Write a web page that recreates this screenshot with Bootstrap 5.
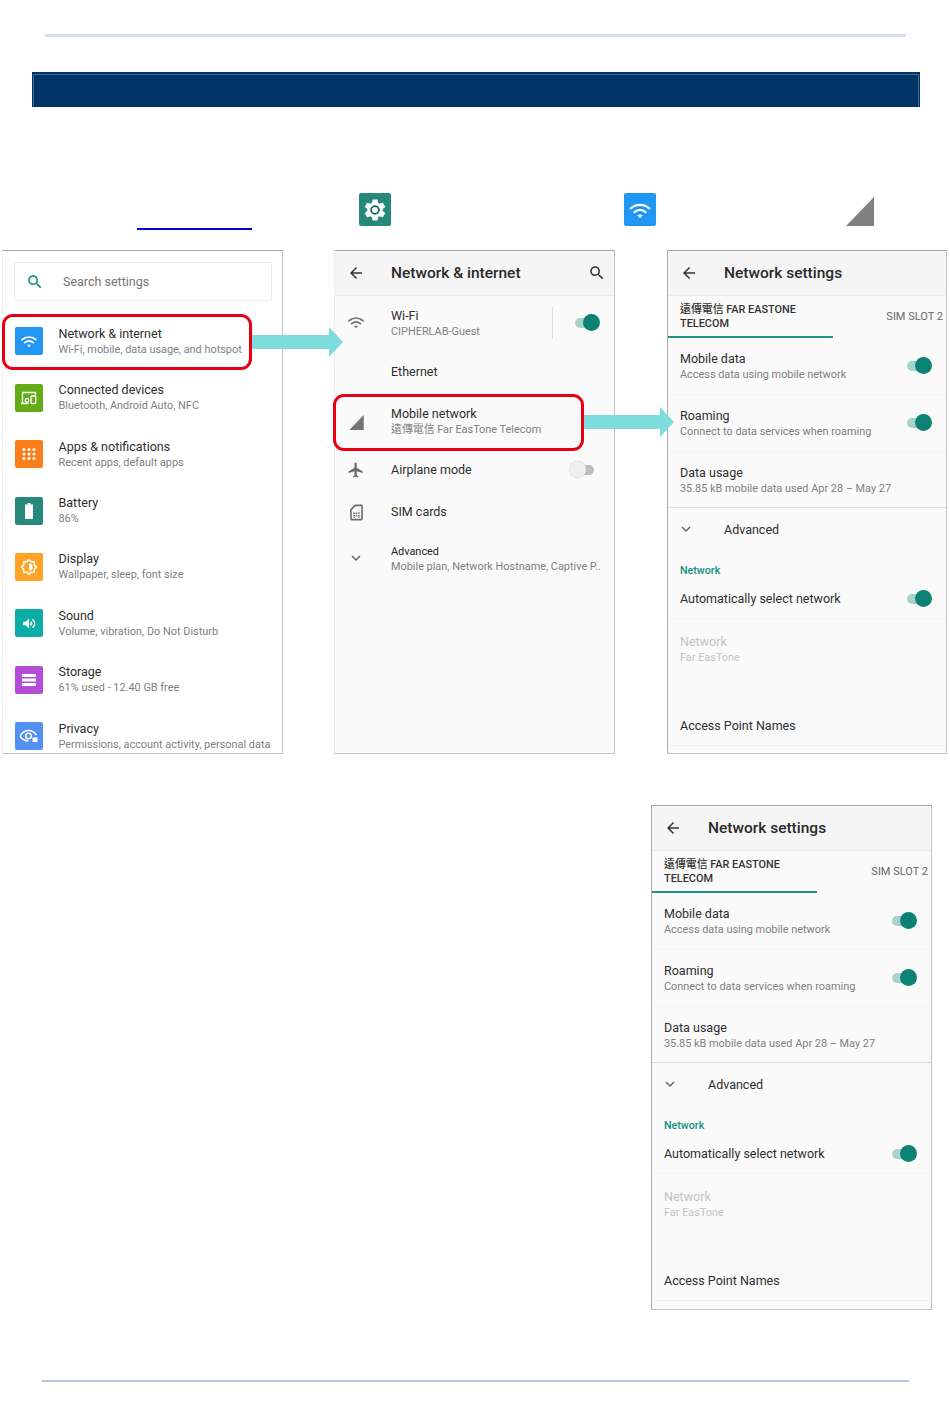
<!DOCTYPE html>
<html lang="en">
<head>
    <meta charset="UTF-8">
    <meta name="viewport" content="width=device-width, initial-scale=1.0">
    <title>Network settings</title>
    <link href="https://cdn.jsdelivr.net/npm/bootstrap@5.3.0/dist/css/bootstrap.min.css" rel="stylesheet">
    <style>
        body { background: #fff; font-family: Roboto, "Noto Sans CJK TC", sans-serif; color: #222; }
        .doc-page { width: 950px; height: 1419px; padding-top: 34px; overflow: hidden; }
        .rule-top { height: 3px; width: 861px; margin-left: 45px; background: #d5deed; }
        .title-bar { height: 35px; width: 888px; margin: 35px 0 0 32px; background: #003366; padding: 2px 1px 0; }
        .title-inner { height: 100%; border: 1px solid #3f6a94; border-bottom: 0; }
        .icon-strip { height: 37px; margin-top: 86px; }
        .ref-link { width: 115px; height: 2px; background: #0000cc; margin: 35px 0 0 137px; }
        .ref-gear { margin-left: 107px; }
        .ref-wifi { margin-left: 233px; }
        .ref-signal { margin-left: 190px; }
        .app-tile { width: 32px; height: 33px; border-radius: 2px; }
        .phones { height: 504px; margin-top: 20px; position: relative; }
        .phone { width: 281px; height: 504px; background: #fafafa; border: 1px solid #c4c4c4; border-top-color: #a8a8a8; overflow: hidden; }
        .phone-a { margin-left: 2px; background: #fff; border-left-color: #f0f0f0; }
        .phone-b { margin-left: 51px; border-left-color: #eee; }
        .phone-c { margin-left: 52px; width: 280px; border-left-color: #aaa; }
        .phone-d { margin: 51px 0 0 651px; height: 505px; border-left-color: #aaa; }
        .top-bar { height: 45px; background: #f5f5f5; border-bottom: 1px solid #ebebeb; font-size: 15.5px; font-weight: 500; color: #2a2a2a; flex: none; }
        .bar-title { margin-top: 2px; }
        .slot { width: 42px; flex: none; margin-right: 14px; }
        .ttl { font-size: 12.5px; line-height: 16px; color: #2e2e2e; }
        .sub { font-size: 10.9px; line-height: 15px; color: #808080; white-space: nowrap; }
        .search-box { height: 39px; margin: 11px 10px 0 11px; border: 1px solid #ececec; border-radius: 2px; font-size: 12.5px; color: #757575; padding-left: 11px; }
        .search-box svg { margin-right: 19px; }
        .search-box span { margin-top: 2px; }
        .list-a { padding-top: 12px; }
        .row-a { height: 56.45px; padding-left: 12px; }
        .row-a .app-tile { width: 28px; height: 28px; margin-right: 15.5px; flex: none; }
        .t-wifi { background: #2196f3; }
        .t-dev { background: #65ad17; }
        .t-apps { background: #fb7e1c; }
        .t-batt { background: #26897c; }
        .t-disp { background: #ffa326; }
        .t-sound { background: #0bada5; }
        .t-store { background: #b44dd8; }
        .t-priv { background: #5290f2; }
        .wifi-row { height: 54px; }
        .wifi-row svg { margin-top: -3px; }
        .eth-row { height: 43px; }
        .mob-row { height: 57px; }
        .air-row { height: 39px; }
        .sim-row { height: 45px; }
        .adv-row { height: 50px; }
        .adv-row .slot svg { margin-top: -3px; }
        .wifi-div { width: 1px; height: 32px; background: #ddd; margin-right: 22px; }
        .tgl { width: 25px; height: 18px; position: relative; flex: none; margin-right: 14px; }
        .tgl::before { content: ""; position: absolute; left: 0; right: 3px; top: 4px; height: 10px; border-radius: 5px; background: #a7d3cd; }
        .tgl::after { content: ""; position: absolute; right: 0; top: 0; width: 17px; height: 17px; border-radius: 50%; background: #0b8273; }
        .tgl-off { margin-right: 20px; }
        .tgl-off::before { background: #bdbdbd; left: 3px; right: 0; }
        .tgl-off::after { left: 0; right: auto; background: #efefef; box-shadow: 0 0 1px #bbb; }
        .tab-strip { height: 42px; flex: none; position: relative; }
        .tab-on { width: 165px; height: 42px; border-bottom: 2px solid #1f9683; padding: 7px 0 0 12px; font-size: 10.9px; line-height: 14px; font-weight: 500; color: #333; }
        .tab-off { font-size: 11px; color: #666; padding: 13px 3px 0 0; }
        .row-c { height: 57px; padding-left: 12px; border-bottom: 1px solid #f4f4f4; }
        .row-c.last-c { height: 56px; padding-top: 2px; border-bottom-color: #dcdcdc; }
        .adv-c { height: 42px; padding-top: 2px; }
        .adv-c svg { margin: -3px 6px 0 0; }
        .net-label { height: 28px; padding-left: 12px; font-size: 10.7px; font-weight: 500; color: #12917f; line-height: 15px; }
        .auto-c { height: 41px; padding: 2px 0 0 12px; border-bottom: 1px solid #f4f4f4; }
        .off-c { height: 60px; padding-left: 12px; }
        .off-c .ttl, .off-c .sub { color: #c4c4c4; }
        .apn-c { height: 40px; margin-top: 27px; padding-left: 12px; border-bottom: 1px solid #f2f2f2; }
        .frame-red { position: absolute; border: 3px solid #e60012; border-radius: 11px; }
        .frame-one { left: 2px; top: 64px; width: 250px; height: 56px; }
        .frame-two { left: 333px; top: 144px; width: 251px; height: 57px; }
        .go-arrow { position: absolute; }
        .go-one { left: 251px; top: 77px; }
        .go-two { left: 583px; top: 157px; }
        .rule-bot { height: 2px; width: 867px; margin: 70px 0 0 42px; background: #b3c5df; }
    </style>
</head>
<body>
<svg width="0" height="0" class="d-block">
    <defs>
        <symbol id="i-back" viewBox="0 0 24 24"><path d="M20 11H7.83l5.59-5.59L12 4l-8 8 8 8 1.41-1.41L7.83 13H20v-2z"/></symbol>
        <symbol id="i-search" viewBox="0 0 24 24"><path d="M15.5 14h-.79l-.28-.27C15.41 12.59 16 11.11 16 9.5 16 5.91 13.09 3 9.5 3S3 5.91 3 9.5 5.91 16 9.5 16c1.61 0 3.09-.59 4.23-1.57l.27.28v.79l5 4.99L20.49 19l-4.99-5zm-6 0C7.01 14 5 11.99 5 9.5S7.01 5 9.5 5 14 7.01 14 9.5 11.99 14 9.5 14z"/></symbol>
        <symbol id="i-down" viewBox="0 0 24 24"><path d="M16.59 8.59L12 13.17 7.41 8.59 6 10l6 6 6-6z"/></symbol>
        <symbol id="i-wifi" viewBox="0 0 24 24"><path d="M3.5 10.5c5-4.4 12-4.4 17 0M6.8 14c3.2-2.7 7.2-2.7 10.4 0" fill="none" stroke="currentColor" stroke-width="2" stroke-linecap="round"/><path d="M9.6 16.8c1.5-1 3.3-1 4.8 0L12 19.6z" fill="currentColor"/></symbol>
        <symbol id="i-signal" viewBox="0 0 28 29"><path d="M28 0v29H0z"/></symbol>
        <symbol id="i-gear" viewBox="0 0 24 24"><path d="M19.14 12.94c.04-.3.06-.61.06-.94 0-.32-.02-.64-.07-.94l2.03-1.58c.18-.14.23-.41.12-.61l-1.92-3.32c-.12-.22-.37-.29-.59-.22l-2.39.96c-.5-.38-1.03-.7-1.62-.94l-.36-2.54c-.04-.24-.24-.41-.48-.41h-3.84c-.24 0-.43.17-.47.41l-.36 2.54c-.59.24-1.13.57-1.62.94l-2.39-.96c-.22-.08-.47 0-.59.22L2.74 8.87c-.12.21-.08.47.12.61l2.03 1.58c-.05.3-.09.63-.09.94s.02.64.07.94l-2.03 1.58c-.18.14-.23.41-.12.61l1.92 3.32c.12.22.37.29.59.22l2.39-.96c.5.38 1.03.7 1.62.94l.36 2.54c.05.24.24.41.48.41h3.84c.24 0 .44-.17.47-.41l.36-2.54c.59-.24 1.13-.56 1.62-.94l2.39.96c.22.08.47 0 .59-.22l1.92-3.32c.12-.22.07-.47-.12-.61l-2.01-1.58z" fill="#fff"/><circle cx="12" cy="12" r="3.6" fill="#fff" stroke="#0b6b60" stroke-width="1.6"/></symbol>
    </defs>
</svg>

<div class="doc-page">
    <div class="rule-top"></div>
    <div class="title-bar"><div class="title-inner"></div></div>

    <div class="icon-strip d-flex align-items-start">
        <div class="ref-link"></div>
        <div class="app-tile ref-gear d-flex align-items-center justify-content-center t-batt"><svg width="26" height="26"><use href="#i-gear"/></svg></div>
        <div class="app-tile ref-wifi d-flex align-items-center justify-content-center t-wifi text-white"><svg width="26" height="26"><use href="#i-wifi"/></svg></div>
        <svg class="ref-signal mt-1" width="28" height="29" fill="#808080"><use href="#i-signal"/></svg>
    </div>

    <div class="phones d-flex">
        <!-- settings home -->
        <div class="phone phone-a">
            <div class="search-box d-flex align-items-center">
                <svg width="18" height="18" fill="#0f8a7b"><use href="#i-search"/></svg>
                <span>Search settings</span>
            </div>
            <div class="list-a">
                <div class="row-a d-flex align-items-center">
                    <div class="app-tile t-wifi d-flex align-items-center justify-content-center text-white"><svg width="20" height="20"><use href="#i-wifi"/></svg></div>
                    <div><div class="ttl">Network &amp; internet</div><div class="sub">Wi-Fi, mobile, data usage, and hotspot</div></div>
                </div>
                <div class="row-a d-flex align-items-center">
                    <div class="app-tile t-dev d-flex align-items-center justify-content-center">
                        <svg width="20" height="20" viewBox="0 0 20 20" fill="none" stroke="#fff" stroke-width="1.3"><path d="M3.500 15V4.500h13V7M2 15.500h7.500"/><circle cx="8" cy="12.500" r="1.800"/><rect x="12" y="8" width="4.800" height="7.500" rx=".8"/></svg>
                    </div>
                    <div><div class="ttl">Connected devices</div><div class="sub">Bluetooth, Android Auto, NFC</div></div>
                </div>
                <div class="row-a d-flex align-items-center">
                    <div class="app-tile t-apps d-flex align-items-center justify-content-center">
                        <svg width="20" height="20" viewBox="0 0 20 20" fill="#fff"><circle cx="5" cy="5.500" r="1.500"/><circle cx="10" cy="5.500" r="1.500"/><circle cx="15" cy="5.500" r="1.500"/><circle cx="5" cy="10" r="1.500"/><circle cx="10" cy="10" r="1.500"/><circle cx="15" cy="10" r="1.500"/><circle cx="5" cy="14.500" r="1.500"/><circle cx="10" cy="14.500" r="1.500"/><circle cx="15" cy="14.500" r="1.500"/></svg>
                    </div>
                    <div><div class="ttl">Apps &amp; notifications</div><div class="sub">Recent apps, default apps</div></div>
                </div>
                <div class="row-a d-flex align-items-center">
                    <div class="app-tile t-batt d-flex align-items-center justify-content-center">
                        <svg width="20" height="20" viewBox="0 0 20 20" fill="#fff"><path d="M8.500 2h3v1.600H14V18H6V3.600h2.500z"/></svg>
                    </div>
                    <div><div class="ttl">Battery</div><div class="sub">86%</div></div>
                </div>
                <div class="row-a d-flex align-items-center">
                    <div class="app-tile t-disp d-flex align-items-center justify-content-center">
                        <svg width="18" height="18" viewBox="0 0 24 24"><path d="M20 8.690V4h-4.690L12 .69 8.690 4H4v4.690L.69 12 4 15.310V20h4.690L12 23.310 15.310 20H20v-4.690L23.310 12 20 8.690zm-2 5.790V18h-3.520L12 20.480 9.520 18H6v-3.520L3.520 12 6 9.520V6h3.520L12 3.520 14.480 6H18v3.520L20.480 12 18 14.480z" fill="#fff"/><path d="M12 7c2.800 0 5 2.200 5 5s-2.200 5-5 5z" fill="#fff"/></svg>
                    </div>
                    <div><div class="ttl">Display</div><div class="sub">Wallpaper, sleep, font size</div></div>
                </div>
                <div class="row-a d-flex align-items-center">
                    <div class="app-tile t-sound d-flex align-items-center justify-content-center">
                        <svg width="17" height="17" viewBox="0 0 24 24" fill="#fff"><path d="M3 9.500v5h3.500l5 4.500V5l-5 4.500z"/><path d="M13.500 8.300v7.400c1.600-.7 2.600-2.100 2.600-3.700s-1-3-2.600-3.700z"/><path d="M16.500 5.500l-1 1.600c1.800 1 2.900 2.800 2.900 4.900s-1.100 3.900-2.900 4.900l1 1.600c2.400-1.400 3.800-3.800 3.800-6.500s-1.400-5.100-3.800-6.500z"/></svg>
                    </div>
                    <div><div class="ttl">Sound</div><div class="sub">Volume, vibration, Do Not Disturb</div></div>
                </div>
                <div class="row-a d-flex align-items-center">
                    <div class="app-tile t-store d-flex align-items-center justify-content-center">
                        <svg width="20" height="20" viewBox="0 0 20 20" fill="#fff"><rect x="3" y="4" width="14" height="3"/><rect x="3" y="8.500" width="14" height="3"/><rect x="3" y="13" width="14" height="3"/></svg>
                    </div>
                    <div><div class="ttl">Storage</div><div class="sub">61% used - 12.40 GB free</div></div>
                </div>
                <div class="row-a d-flex align-items-center">
                    <div class="app-tile t-priv d-flex align-items-center justify-content-center">
                        <svg width="22" height="20" viewBox="0 0 22 20" fill="none" stroke="#fff" stroke-width="1.500"><path d="M2 10c2.400-3.800 5.200-5.500 8.500-5.500s6 1.600 8 4.600M2 10c2.200 3.400 5 5 8.500 5"/><circle cx="10.500" cy="10" r="2.800"/><rect x="14.500" y="11.500" width="5" height="4.500" fill="#fff" stroke="none"/></svg>
                    </div>
                    <div><div class="ttl">Privacy</div><div class="sub">Permissions, account activity, personal data</div></div>
                </div>
            </div>
        </div>

        <!-- network and internet -->
        <div class="phone phone-b d-flex flex-column">
            <div class="top-bar d-flex align-items-center">
                <div class="slot text-center"><svg class="d-inline-block" width="18" height="18" fill="#333"><use href="#i-back"/></svg></div>
                <div class="flex-grow-1 bar-title">Network &amp; internet</div>
                <svg class="me-2" width="18" height="18" fill="#333"><use href="#i-search"/></svg>
            </div>
            <div class="wifi-row d-flex align-items-center">
                <div class="slot text-center"><svg width="20" height="20" class="text-secondary"><use href="#i-wifi"/></svg></div>
                <div class="flex-grow-1"><div class="ttl">Wi-Fi</div><div class="sub">CIPHERLAB-Guest</div></div>
                <div class="wifi-div"></div>
                <div class="tgl"></div>
            </div>
            <div class="eth-row d-flex align-items-center">
                <div class="slot"></div>
                <div class="ttl">Ethernet</div>
            </div>
            <div class="mob-row d-flex align-items-center">
                <div class="slot text-center"><svg width="15" height="15" fill="#757575"><use href="#i-signal"/></svg></div>
                <div><div class="ttl">Mobile network</div><div class="sub">遠傳電信 Far EasTone Telecom</div></div>
            </div>
            <div class="air-row d-flex align-items-center">
                <div class="slot text-center"><svg width="18" height="18" viewBox="0 0 24 24" fill="#6b6b6b"><path d="M21 16v-2l-8-5V3.500c0-.83-.67-1.500-1.500-1.500S10 2.670 10 3.500V9l-8 5v2l8-2.500V19l-2 1.500V22l3.500-1 3.500 1v-1.500L13 19v-5.500l8 2.500z"/></svg></div>
                <div class="flex-grow-1 ttl">Airplane mode</div>
                <div class="tgl tgl-off"></div>
            </div>
            <div class="sim-row d-flex align-items-center">
                <div class="slot text-center">
                    <svg width="19" height="19" viewBox="0 0 24 24" fill="#6b6b6b"><path d="M18 2h-8L4 8v12c0 1.100.9 2 2 2h12c1.100 0 2-.9 2-2V4c0-1.100-.9-2-2-2zm0 18H6V8.830L10.830 4H18v16z"/><path d="M8 15h2v2H8zm3 0h2v2h-2zm3 0h2v2h-2zM8 12h2v2H8zm6 0h2v2h-2zm-3 0h2v2h-2zM8 18h2v1H8zm6 0h2v1h-2z"/></svg>
                </div>
                <div class="ttl">SIM cards</div>
            </div>
            <div class="adv-row d-flex align-items-center">
                <div class="slot text-center"><svg width="18" height="18" fill="#666"><use href="#i-down"/></svg></div>
                <div><div class="sub text-dark">Advanced</div><div class="sub">Mobile plan, Network Hostname, Captive P..</div></div>
            </div>
        </div>

        <!-- network settings -->
        <div class="phone phone-c d-flex flex-column">
            <div class="top-bar d-flex align-items-center">
                <div class="slot text-center"><svg width="18" height="18" fill="#333"><use href="#i-back"/></svg></div>
                <div class="bar-title">Network settings</div>
            </div>
            <div class="tab-strip d-flex justify-content-between">
                <div class="tab-on">遠傳電信 FAR EASTONE<br>TELECOM</div>
                <div class="tab-off">SIM SLOT 2</div>
            </div>
            <div class="row-c d-flex align-items-center justify-content-between">
                <div><div class="ttl">Mobile data</div><div class="sub">Access data using mobile network</div></div>
                <div class="tgl"></div>
            </div>
            <div class="row-c d-flex align-items-center justify-content-between">
                <div><div class="ttl">Roaming</div><div class="sub">Connect to data services when roaming</div></div>
                <div class="tgl"></div>
            </div>
            <div class="row-c last-c d-flex align-items-center">
                <div><div class="ttl">Data usage</div><div class="sub">35.85 kB mobile data used Apr 28 – May 27</div></div>
            </div>
            <div class="adv-c d-flex align-items-center ttl">
                <div class="slot text-center"><svg width="18" height="18" fill="#666"><use href="#i-down"/></svg></div>
                <div>Advanced</div>
            </div>
            <div class="net-label d-flex align-items-end">Network</div>
            <div class="auto-c d-flex align-items-center justify-content-between">
                <div class="ttl">Automatically select network</div>
                <div class="tgl"></div>
            </div>
            <div class="off-c d-flex align-items-center">
                <div><div class="ttl">Network</div><div class="sub">Far EasTone</div></div>
            </div>
            <div class="apn-c d-flex align-items-center ttl">Access Point Names</div>
        </div>

        <svg class="go-arrow go-one" width="92" height="30" viewBox="0 0 92 30" fill="#7fdcdc"><path d="M0 8h78V0l14 15-14 15v-8H0z"/></svg>
        <svg class="go-arrow go-two" width="91" height="30" viewBox="0 0 91 30" fill="#7fdcdc"><path d="M0 8h77V0l14 15-14 15v-8H0z"/></svg>
        <div class="frame-red frame-one"></div>
        <div class="frame-red frame-two"></div>
    </div>

    <!-- same screen again -->
    <div class="phone phone-d d-flex flex-column">
        <div class="top-bar d-flex align-items-center">
            <div class="slot text-center"><svg width="18" height="18" fill="#333"><use href="#i-back"/></svg></div>
            <div class="bar-title">Network settings</div>
        </div>
        <div class="tab-strip d-flex justify-content-between">
            <div class="tab-on">遠傳電信 FAR EASTONE<br>TELECOM</div>
            <div class="tab-off">SIM SLOT 2</div>
        </div>
        <div class="row-c d-flex align-items-center justify-content-between">
            <div><div class="ttl">Mobile data</div><div class="sub">Access data using mobile network</div></div>
            <div class="tgl"></div>
        </div>
        <div class="row-c d-flex align-items-center justify-content-between">
            <div><div class="ttl">Roaming</div><div class="sub">Connect to data services when roaming</div></div>
            <div class="tgl"></div>
        </div>
        <div class="row-c last-c d-flex align-items-center">
            <div><div class="ttl">Data usage</div><div class="sub">35.85 kB mobile data used Apr 28 – May 27</div></div>
        </div>
        <div class="adv-c d-flex align-items-center ttl">
            <div class="slot text-center"><svg width="18" height="18" fill="#666"><use href="#i-down"/></svg></div>
            <div>Advanced</div>
        </div>
        <div class="net-label d-flex align-items-end">Network</div>
        <div class="auto-c d-flex align-items-center justify-content-between">
            <div class="ttl">Automatically select network</div>
            <div class="tgl"></div>
        </div>
        <div class="off-c d-flex align-items-center">
            <div><div class="ttl">Network</div><div class="sub">Far EasTone</div></div>
        </div>
        <div class="apn-c d-flex align-items-center ttl">Access Point Names</div>
    </div>

    <div class="rule-bot"></div>
</div>
<script src="https://cdn.jsdelivr.net/npm/bootstrap@5.3.0/dist/js/bootstrap.bundle.min.js"></script>
</body>
</html>
